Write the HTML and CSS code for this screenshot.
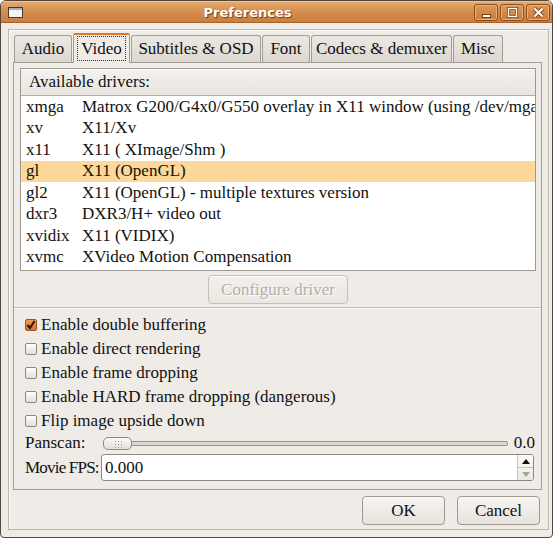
FILE: index.html
```html
<!DOCTYPE html>
<html>
<head>
<meta charset="utf-8">
<link rel="stylesheet" href="styles.css">
</head>
<body>
<div class="window">
  <div class="titlebar">
    <svg class="app-icon" width="15" height="11" viewBox="0 0 15 11">
      <rect x="0.5" y="0.5" width="14" height="10" fill="#f4f4f4" stroke="#3c3c3c"/>
      <rect x="1" y="1" width="13" height="2" fill="#9db0cf"/>
    </svg>
    <div class="title">Preferences</div>
    <div class="wm-buttons">
      <div class="wm-btn">
        <svg width="22" height="15" viewBox="0 0 22 15"><rect x="7.5" y="9.5" width="8" height="3" fill="#fff" stroke="#7a4418"/></svg>
      </div>
      <div class="wm-btn">
        <svg width="22" height="15" viewBox="0 0 22 15"><rect x="7.5" y="3.5" width="8" height="8" fill="none" stroke="#7a4418" stroke-width="3"/><rect x="7.5" y="3.5" width="8" height="8" fill="none" stroke="#fff" stroke-width="1.4"/></svg>
      </div>
      <div class="wm-btn">
        <svg width="22" height="15" viewBox="0 0 22 15"><path d="M7.5 3.5 L15.5 11.5 M15.5 3.5 L7.5 11.5" stroke="#7a4418" stroke-width="4"/><path d="M7.5 3.5 L15.5 11.5 M15.5 3.5 L7.5 11.5" stroke="#fff" stroke-width="2.2"/></svg>
      </div>
    </div>
  </div>
  <div class="main">
    <div class="frame">
      <div class="notebook">
        <div class="tabs">
          <div class="tab tab-audio">Audio</div>
          <div class="tab active tab-video"><span class="focus">Video</span></div>
          <div class="tab tab-subs">Subtitles &amp; OSD</div>
          <div class="tab tab-font">Font</div>
          <div class="tab tab-codecs">Codecs &amp; demuxer</div>
          <div class="tab tab-misc">Misc</div>
        </div>
        <div class="panel">
          <div class="drivers">
            <div class="list">
              <div class="list-head">Available drivers:</div>
              <div class="list-body">
                <div class="row"><span class="name">xmga</span><span class="desc">Matrox G200/G4x0/G550 overlay in X11 window (using /dev/mga_vid)</span></div>
                <div class="row"><span class="name">xv</span><span class="desc">X11/Xv</span></div>
                <div class="row"><span class="name">x11</span><span class="desc">X11 ( XImage/Shm )</span></div>
                <div class="row selected"><span class="name">gl</span><span class="desc">X11 (OpenGL)</span></div>
                <div class="row"><span class="name">gl2</span><span class="desc">X11 (OpenGL) - multiple textures version</span></div>
                <div class="row"><span class="name">dxr3</span><span class="desc">DXR3/H+ video out</span></div>
                <div class="row"><span class="name">xvidix</span><span class="desc">X11 (VIDIX)</span></div>
                <div class="row"><span class="name">xvmc</span><span class="desc">XVideo Motion Compensation</span></div>
              </div>
            </div>
            <div class="btn-row"><div class="btn btn-config disabled">Configure driver</div></div>
          </div>
          <div class="sep"></div>
          <div class="options">
            <div class="check"><span class="box checked"><svg width="10" height="10" viewBox="0 0 10 10"><path d="M1.5 5 L4 8 L8.5 1" fill="none" stroke="#1a1a1a" stroke-width="2"/></svg></span>Enable double buffering</div>
            <div class="check"><span class="box"></span>Enable direct rendering</div>
            <div class="check"><span class="box"></span>Enable frame dropping</div>
            <div class="check"><span class="box"></span>Enable HARD frame dropping (dangerous)</div>
            <div class="check"><span class="box"></span>Flip image upside down</div>
            <div class="fields">
              <span class="lbl lbl-pan">Panscan:</span>
              <div class="slider">
                <div class="trough"><span class="thumb"></span></div>
                <span class="val">0.0</span>
              </div>
              <span class="lbl lbl-fps">Movie FPS:</span>
              <div class="spin">
                <span class="spin-text">0.000</span>
                <span class="spin-btns">
                  <span class="arrow up"></span>
                  <span class="arrow down"></span>
                </span>
              </div>
            </div>
          </div>
        </div>
      </div>
      <div class="dialog-buttons">
        <div class="btn btn-dlg">OK</div>
        <div class="btn btn-dlg">Cancel</div>
      </div>
    </div>
  </div>
</div>
</body>
</html>
```
FILE: styles.css
```css
* { box-sizing: border-box; }
html, body { margin: 0; padding: 0; background: #ffffff; }
body {
  width: 555px;
  height: 541px;
  font-family: "Liberation Serif", "Times New Roman", serif;
  font-size: 17px;
  color: #111;
}
.window {
  width: 553px;
  height: 538px;
  border: 1px solid #53473c;
  border-radius: 6px 6px 4px 4px;
  overflow: hidden;
  background: #efebe7;
  display: flex;
  flex-direction: column;
}
.titlebar {
  height: 22px;
  flex: none;
  display: flex;
  align-items: center;
  padding: 0 2px 0 7px;
  background: linear-gradient(#e6ac70 0%, #d68f4e 45%, #c97d3b 100%);
  box-shadow: inset 0 1px 0 #f0c596, inset 0 -1px 0 #a8622a;
}
.app-icon { flex: none; margin-top: 1px; }
.title {
  flex: 1;
  text-align: center;
  font-family: "DejaVu Sans", sans-serif;
  font-weight: bold;
  font-size: 13px;
  color: #fff;
  text-shadow: 1px 1px 1px rgba(70, 35, 5, 0.75);
  padding-right: 2px;
}
.wm-buttons { display: flex; gap: 2px; }
.wm-btn {
  width: 24px;
  height: 17px;
  border: 1px solid #8b4c1b;
  border-radius: 3px;
  background: linear-gradient(#dc9a5c, #c77a38);
  box-shadow: inset 0 0 0 1px #e8b27e;
  display: flex;
}
.main {
  flex: 1;
  min-width: 0;
  padding: 6px 3px 7px 7px;
  display: flex;
}
.frame {
  flex: 1;
  min-width: 0;
  border: 1px solid #bcb6ad;
  box-shadow: inset 1px 1px 0 #fbfaf8;
  padding: 3px 6px 0 4px;
  display: flex;
  flex-direction: column;
}
.notebook { display: flex; flex-direction: column; min-width: 0; }
.tabs {
  height: 29px;
  display: flex;
  align-items: flex-end;
  padding-left: 1px;
  position: relative;
  z-index: 1;
}
.tab {
  height: 27px;
  border: 1px solid #a29d95;
  border-bottom: none;
  border-radius: 3px 3px 0 0;
  background: linear-gradient(#ece8e3, #dcd7d0);
  display: flex;
  align-items: center;
  justify-content: center;
  white-space: nowrap;
  margin-right: 1px;
}
.tab-audio { width: 58px; }
.tab-video { width: 57px; }
.tab-subs { width: 130px; }
.tab-font { width: 48px; }
.tab-codecs { width: 141px; }
.tab-misc { width: 50px; }
.tab.active {
  height: 30px;
  margin-bottom: -1px;
  background: #efebe7;
  border-top: 2px solid #e0762a;
  border-radius: 2px 2px 0 0;
  align-items: flex-start;
  padding-top: 1px;
}
.focus {
  border: 1px dotted #333;
  padding: 0 3px;
  height: 25px;
  line-height: 23px;
}
.panel {
  height: 428px;
  min-width: 0;
  border: 1px solid #a29d95;
  display: flex;
  flex-direction: column;
}
.drivers { padding: 5px 5px 3px 6px; min-width: 0; }
.list {
  height: 203px;
  min-width: 0;
  overflow: hidden;
  border: 1px solid #9c978f;
  background: #fff;
  display: flex;
  flex-direction: column;
}
.list-head {
  height: 27px;
  flex: none;
  background: linear-gradient(#f3f1ee, #e9e5e0);
  border-bottom: 1px solid #b3ada4;
  box-shadow: inset 0 1px 0 #fff;
  padding-left: 8px;
  line-height: 26px;
}
.list-body { flex: 1; overflow: hidden; min-width: 0; }
.row {
  height: 21.5px;
  display: flex;
  align-items: center;
  white-space: nowrap;
  padding-left: 5px;
  min-width: 0;
}
.row.selected { background: #fdd89a; }
.name { width: 56px; flex: none; }
.desc { overflow: hidden; min-width: 0; flex: 1; }
.btn-row { display: flex; justify-content: center; margin-top: 4px; }
.btn {
  height: 29px;
  border: 1px solid #9e988f;
  border-radius: 4px;
  background: linear-gradient(#f7f5f3, #e6e2dc);
  box-shadow: inset 0 1px 0 #fff;
  display: flex;
  align-items: center;
  justify-content: center;
  white-space: nowrap;
}
.btn-config { width: 140px; }
.btn.disabled {
  color: #b4afa7;
  text-shadow: 1px 1px 0 #fff;
  border-color: #c4bfb7;
  background: linear-gradient(#f2f0ed, #eae6e1);
}
.sep {
  height: 2px;
  flex: none;
  border-top: 1px solid #c2bdb5;
  border-bottom: 1px solid #fbfaf8;
}
.options { padding: 4px 7px 0 11px; min-width: 0; }
.check {
  height: 24px;
  display: flex;
  align-items: center;
  white-space: nowrap;
}
.box {
  width: 12px;
  height: 12px;
  flex: none;
  margin-right: 4px;
  border: 1px solid #8d8880;
  border-radius: 2px;
  background: linear-gradient(#ffffff, #e4e0db);
  display: flex;
  align-items: center;
  justify-content: center;
}
.box.checked {
  border-color: #a4531b;
  background: linear-gradient(#f29a55, #de712b);
}
.fields {
  display: grid;
  grid-template-columns: 76px minmax(0, 1fr);
  grid-template-rows: 20px 27px;
  row-gap: 1px;
  align-items: center;
}
.lbl { white-space: nowrap; }
.lbl-fps { letter-spacing: -0.8px; }
.slider {
  display: flex;
  align-items: center;
  padding-left: 2px;
  min-width: 0;
}
.trough {
  flex: 1;
  height: 5px;
  border: 1px solid #99938a;
  border-radius: 2px;
  background: #dcd7cf;
  position: relative;
}
.thumb {
  position: absolute;
  left: -1px;
  top: -5px;
  width: 29px;
  height: 13px;
  border: 1px solid #8f8981;
  border-radius: 5px;
  background:
    radial-gradient(circle, #a09a92 0.6px, transparent 0.9px) 10px 2px / 3px 3px,
    linear-gradient(#fbfaf9, #e2ded8);
  background-repeat: repeat, no-repeat;
  background-clip: content-box, border-box;
  padding: 1px 9px;
}
.val { margin-left: 6px; margin-right: -1px; }
.spin {
  height: 27px;
  min-width: 0;
  border: 1px solid #8f8981;
  border-radius: 3px;
  background: #fff;
  display: flex;
  align-items: stretch;
}
.spin-text {
  flex: 1;
  padding-left: 3px;
  display: flex;
  align-items: center;
}
.spin-btns {
  width: 16px;
  border-left: 1px solid #c7c2ba;
  display: flex;
  flex-direction: column;
  background: linear-gradient(#fbfaf8, #ece9e4);
  border-radius: 0 2px 2px 0;
}
.arrow {
  flex: 1;
  display: flex;
  align-items: center;
  justify-content: center;
}
.arrow.up { border-bottom: 1px solid #c7c2ba; }
.arrow.up::after {
  content: "";
  border-left: 4px solid transparent;
  border-right: 4px solid transparent;
  border-bottom: 5px solid #111;
}
.arrow.down::after {
  content: "";
  border-left: 4px solid transparent;
  border-right: 4px solid transparent;
  border-top: 5px solid #a9a49c;
}
.dialog-buttons {
  display: flex;
  justify-content: flex-end;
  gap: 12px;
  margin-top: 6px;
  padding-right: 2px;
}
.btn-dlg { width: 83px; }
```
